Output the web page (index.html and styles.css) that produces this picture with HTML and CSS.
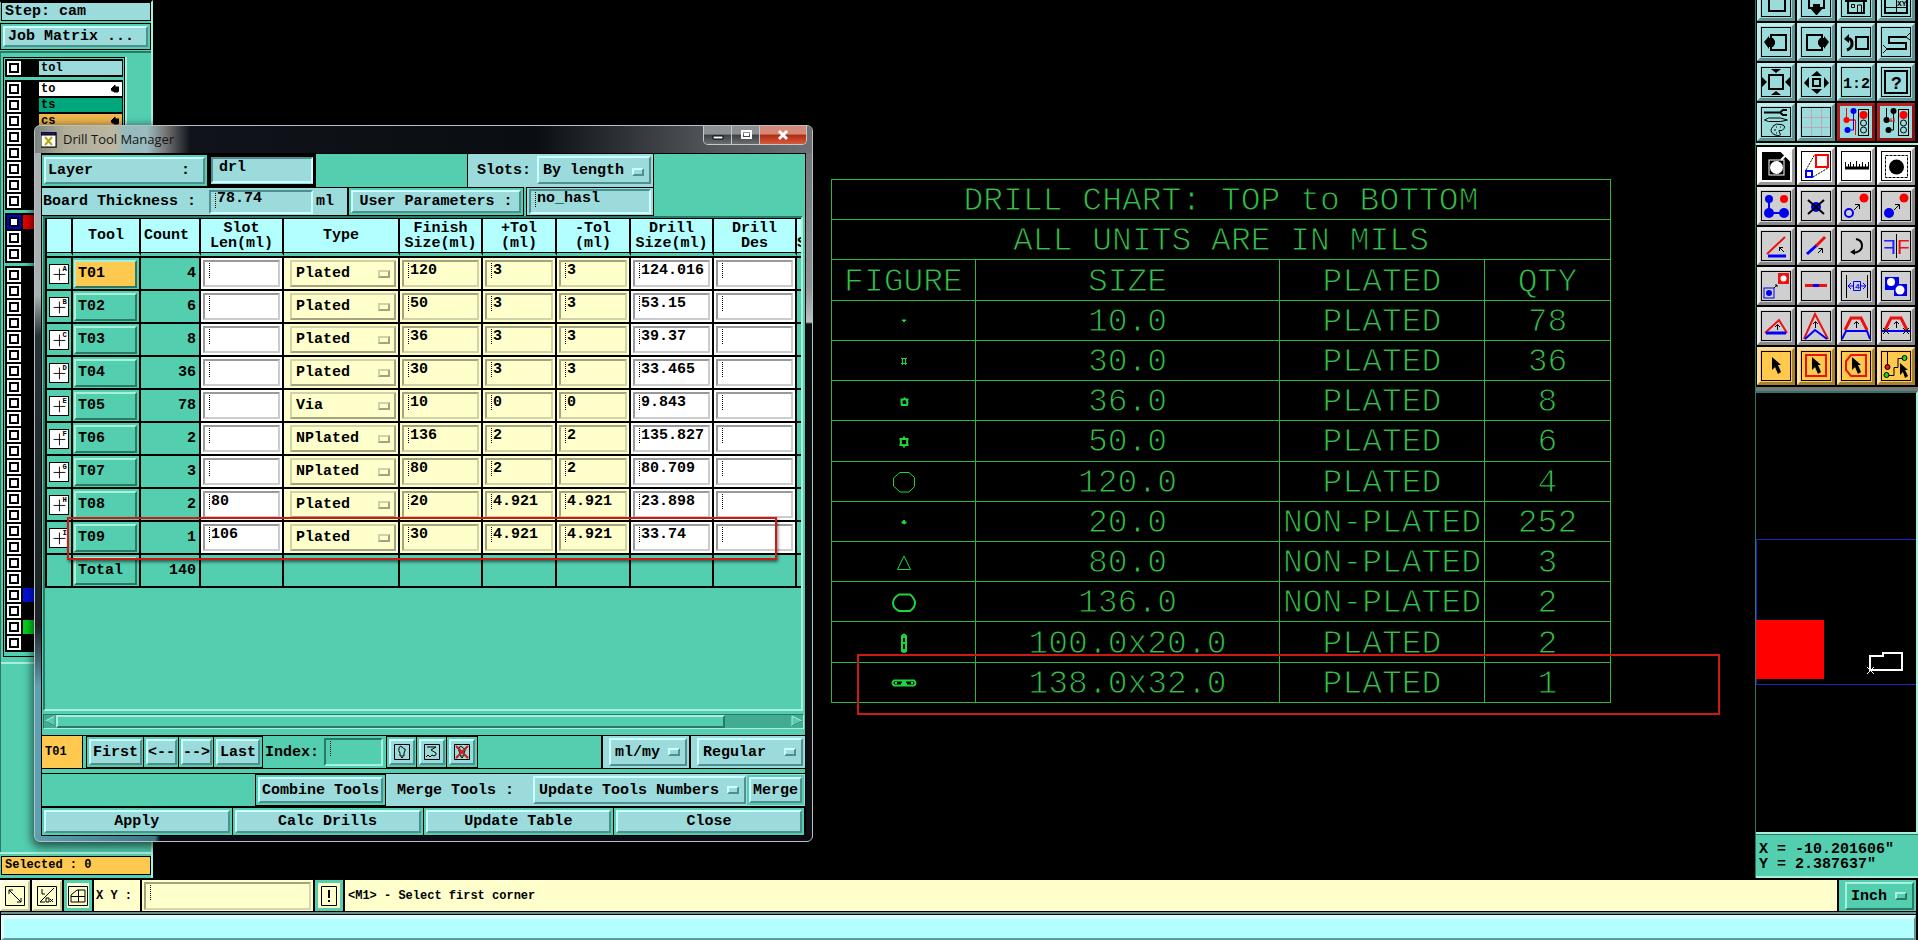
FILE: index.html
```html
<!DOCTYPE html>
<html lang="en">
<head>
  <meta charset="UTF-8">
  <title>Drill Tool Manager</title>
  <link rel="stylesheet" href="styles.css">
</head>
<body>

  <div class="workspace">

    <aside class="left-panel">
      <div class="step">Step: cam</div>
      <button class="btn matrix">Job Matrix ...</button>
      <div class="layers">
        <div class="layer-list" id="layers"></div>
      </div>
      <div class="left-fill"></div>
      <div class="selected">Selected : 0</div>
    </aside>

    <main class="canvas">
      <table class="chart">
        <colgroup><col class="c-fig"><col class="c-size"><col class="c-plated"><col class="c-qty"></colgroup>
        <tr><td colspan="4">DRILL CHART: TOP to BOTTOM</td></tr>
        <tr><td colspan="4">ALL UNITS ARE IN MILS</td></tr>
        <tr><td>FIGURE</td><td>SIZE</td><td>PLATED</td><td>QTY</td></tr>
        <tr><td><svg class="fig" viewBox="0 0 30 30"><path d="M13 14h4l-2 2z" fill="#1fd53c"/></svg></td><td>10.0</td><td>PLATED</td><td>78</td></tr>
        <tr><td><svg class="fig" viewBox="0 0 30 30"><path d="M13.500 12v7M16.500 12v7M12 12.500h6M12 17.500h6"/></svg></td><td>30.0</td><td>PLATED</td><td>36</td></tr>
        <tr><td><svg class="fig" viewBox="0 0 30 30"><path d="M12.500 12.500l2 0 1-1 1 1 2 0-.5 2 .5 1-.5 2.500h-5l-.5-2.500z" stroke-width="2"/></svg></td><td>36.0</td><td>PLATED</td><td>8</td></tr>
        <tr><td><svg class="fig" viewBox="0 0 30 30"><path d="M11.500 12h2.500l1-1.500 1 1.500h2.500l-.5 3 .5 3h-2.500l-1 1.500-1-1.500h-2.500l.5-3z" stroke-width="2"/></svg></td><td>50.0</td><td>PLATED</td><td>6</td></tr>
        <tr><td><svg class="fig" viewBox="0 0 30 30"><path d="M11 5.500h9l5.500 5v9l-5.500 5.500h-9l-6.500-6v-8z"/></svg></td><td>120.0</td><td>PLATED</td><td>4</td></tr>
        <tr><td><svg class="fig" viewBox="0 0 30 30"><path d="M12.500 15.500h5M15 13v4M14 14l2 3" stroke-width="2"/></svg></td><td>20.0</td><td>NON-PLATED</td><td>252</td></tr>
        <tr><td><svg class="fig" viewBox="0 0 30 30"><path d="M15 8l6.500 13.500h-13z"/></svg></td><td>80.0</td><td>NON-PLATED</td><td>3</td></tr>
        <tr><td><svg class="fig" viewBox="0 0 30 30"><path d="M10 6.500h11q5 4 5 8.500t-5 8h-11q-6-3-6-8t6-8.500z" stroke-width="2"/></svg></td><td>136.0</td><td>NON-PLATED</td><td>2</td></tr>
        <tr><td><svg class="fig" viewBox="0 0 30 30"><path d="M13 8q2-3 4 0v15q-2 2-4 0zM13 15h4M14 9h2M14 22h2" stroke-width="2"/></svg></td><td>100.0x20.0</td><td>PLATED</td><td>2</td></tr>
        <tr><td><svg class="fig" viewBox="0 0 30 30"><path d="M5 12.500h20q3 3 0 5h-20q-3-3 0-5zM13 14h4M12 16h6M6 15h2M22 15h2" stroke-width="2"/></svg></td><td>138.0x32.0</td><td>PLATED</td><td>1</td></tr>
      </table>
      <div class="mark mark-chart"></div>
    </main>

    <aside class="right-panel">
      <div class="icons view-icons">
        <button aria-label="Zoom box"><svg viewBox="0 0 32 32"><rect class="fr" x="1.500" y="1.500" width="29" height="29"/><rect x="9" y="9" width="16" height="16"/></svg></button>
        <button aria-label="Pan down"><svg viewBox="0 0 32 32"><rect class="fr" x="1.500" y="1.500" width="29" height="29"/><rect x="9" y="7" width="15" height="15"/><path class="k" d="M13 18h7v4h3l-6 7h-1l-6-7h3z"/></svg></button>
        <button aria-label="Home"><svg viewBox="0 0 32 32"><rect class="fr" x="1.500" y="1.500" width="29" height="29"/><path d="M5 15h22M7 14L11 6h10l4 8M8 15v12h16V15" /><path class="n" d="M17.500 27v-8h4v8M11.500 18.500h3v3h-3z"/></svg></button>
        <button aria-label="Window XY"><svg viewBox="0 0 32 32"><rect class="fr" x="1.500" y="1.500" width="29" height="29"/><path d="M5 5h22v22H5z"/><path class="n" d="M5 21.500h22M16.500 5v22"/><text x="17" y="20" class="tiny">XY</text></svg></button>

        <button aria-label="Pan left"><svg viewBox="0 0 32 32"><rect class="fr" x="1.500" y="1.500" width="29" height="29"/><rect x="11" y="9" width="15" height="15"/><path class="k" d="M4 16l5-6v2h4l2 3v3l-2 3H9v2z"/></svg></button>
        <button aria-label="Pan right"><svg viewBox="0 0 32 32"><rect class="fr" x="1.500" y="1.500" width="29" height="29"/><rect x="7" y="9" width="15" height="15"/><path class="k" d="M29 16l-5-6v2h-4l-2 3v3l2 3h4v2z"/></svg></button>
        <button aria-label="Previous view"><svg viewBox="0 0 32 32"><rect class="fr" x="1.500" y="1.500" width="29" height="29"/><rect x="16" y="11" width="12" height="12"/><path d="M6 13h4q2 1 2 5t-5 6" stroke-width="3"/><path class="k" d="M4 13l5-5v9z"/></svg></button>
        <button aria-label="Serpentine"><svg viewBox="0 0 32 32"><rect class="fr" x="1.500" y="1.500" width="29" height="29"/><path d="M27 11H9v6h17v6H7"/><path class="n" d="M26 11l4-4M26 11l4 3M7 23l-4-4M7 23l-4 4"/></svg></button>

        <button aria-label="Zoom out"><svg viewBox="0 0 32 32"><rect class="fr" x="1.500" y="1.500" width="29" height="29"/><rect x="9" y="9" width="14" height="14"/><path class="k" d="M11 3h10l-5 4zM11 29h10l-5-4zM2 11v10l5-5zM30 11v10l-5-5z"/></svg></button>
        <button aria-label="Zoom in"><svg viewBox="0 0 32 32"><rect class="fr" x="1.500" y="1.500" width="29" height="29"/><rect x="13" y="13" width="7" height="7"/><path class="k" d="M11 10h11l-5-5zM11 23h11l-5 5zM9 11v11l-5-5zM24 11v11l5-5z"/></svg></button>
        <button aria-label="Scale 1:2"><svg viewBox="0 0 32 32"><rect class="fr" x="1.500" y="1.500" width="29" height="29"/><text x="3" y="22" class="scale">1:2</text></svg></button>
        <button aria-label="Help"><svg viewBox="0 0 32 32"><rect class="fr" x="1.500" y="1.500" width="29" height="29"/><rect x="5" y="5" width="22" height="22"/><text x="11" y="23" class="help">?</text></svg></button>

        <button aria-label="Settings"><svg viewBox="0 0 32 32"><rect class="fr" x="1.500" y="1.500" width="29" height="29"/><path d="M4 6.500h16M27 4h-4l-3 2.500 3 2.500h4" /><path class="n" d="M4.500 14l4-2h12l7 2-7 1.500h-12zM13 20q3-3 8-1.500 5 1 3 4t-4 2 0 3-6 1q-3-2-3-4t2-4zM16 21h1M20 21h1M14 24h2M16 27h1"/></svg></button>
        <button aria-label="Grid"><svg viewBox="0 0 32 32"><path d="M11.500 2v28M21.500 2v28M2 11.500h28M2 21.500h28" stroke="#bda9b4" stroke-width="1"/><rect class="fr" x="1.500" y="1.500" width="29" height="29"/></svg></button>
        <button class="red" aria-label="Net on"><svg viewBox="0 0 32 32"><rect x="18.500" y="3.500" width="10" height="26" class="n"/><circle class="r" cx="23.500" cy="9" r="4"/><circle class="n" cx="23.500" cy="17" r="3"/><circle class="n" cx="23.500" cy="24" r="3"/><path d="M6.500 2v12h9v15M15 14h-8" stroke="#f00" stroke-width="1"/><path d="M13.500 5v19H7" stroke="#00f" stroke-width="1"/><circle class="b" cx="13.500" cy="5" r="3"/><circle class="r" cx="6.500" cy="14" r="3"/><circle class="b" cx="7.500" cy="24" r="3"/></svg></button>
        <button class="red" aria-label="Net off"><svg viewBox="0 0 32 32"><rect x="18.500" y="3.500" width="10" height="26" class="n"/><circle class="r" cx="23.500" cy="9" r="4"/><circle class="n" cx="23.500" cy="17" r="3"/><circle class="n" cx="23.500" cy="24" r="3"/><path class="n" d="M6.500 2v12M13.500 5v19H7"/><path d="M9 15h6M9 13v3M11 12v4M14 12v4" stroke="#c22" stroke-width="1"/><circle class="k" cx="13.500" cy="5" r="3"/><circle class="k" cx="6.500" cy="14" r="3"/><circle class="k" cx="8.500" cy="24" r="3"/></svg></button>
      </div>

      <div class="icons edit-icons">
        <button class="white" aria-label="Select window"><svg viewBox="0 0 32 32"><rect class="k" x="2" y="2" width="28" height="28"/><rect x="9" y="10" width="15" height="15" stroke="#fff" stroke-width="1"/><circle cx="16.500" cy="17.500" r="6.500" fill="#fff" stroke="none"/><path d="M21 10l5-5M23 3h6v6z" stroke="#fff" fill="#fff"/></svg></button>
        <button class="white" aria-label="Scale"><svg viewBox="0 0 32 32"><rect class="fr" x="1.500" y="1.500" width="29" height="29"/><path class="n" d="M6 20L15 4M13 27l15-9" stroke-dasharray="2 1"/><rect x="16" y="5" width="12" height="12" stroke="#f00"/><rect x="6" y="21" width="6" height="6" stroke="#00f"/></svg></button>
        <button class="white" aria-label="Measure"><svg viewBox="0 0 32 32"><rect class="fr" x="1.500" y="1.500" width="29" height="29"/><path d="M5 18h24" stroke-width="3"/><path class="n" d="M5.500 12v6M8.500 14v4M10.500 12v6M13.500 14v4M16.500 11v7M19.500 14v4M22.500 12v6M25.500 14v4M28.500 12v6"/></svg></button>
        <button class="white" aria-label="Pad"><svg viewBox="0 0 32 32"><rect class="fr" x="1.500" y="1.500" width="29" height="29"/><rect class="n" x="5.500" y="5.500" width="22" height="22" stroke-dasharray="3 1"/><circle class="k" cx="16.500" cy="17" r="7.500"/></svg></button>

        <button aria-label="Connect"><svg viewBox="0 0 32 32"><rect class="fr" x="1.500" y="1.500" width="29" height="29"/><path d="M9 9v14h15" stroke="#00f"/><circle class="b" cx="9" cy="9" r="4"/><circle class="b" cx="9" cy="23" r="5"/><circle class="b" cx="24" cy="23" r="5"/><circle class="r" cx="24" cy="9" r="4"/></svg></button>
        <button aria-label="Delete"><svg viewBox="0 0 32 32"><rect class="fr" x="1.500" y="1.500" width="29" height="29"/><circle class="b" cx="16" cy="17" r="5"/><path d="M8 10l16 14M8 24l16-14"/></svg></button>
        <button aria-label="Copy"><svg viewBox="0 0 32 32"><rect class="fr" x="1.500" y="1.500" width="29" height="29"/><circle cx="9" cy="23" r="4" stroke="#00f"/><circle class="r" cx="24" cy="8" r="4.500"/><path class="n" d="M14 20l5-5M15 14.500h4.500V19"/></svg></button>
        <button aria-label="Move"><svg viewBox="0 0 32 32"><rect class="fr" x="1.500" y="1.500" width="29" height="29"/><circle class="b" cx="9" cy="23" r="5"/><circle class="r" cx="24" cy="8" r="4.500"/><path class="n" d="M14 20l5-5M15 14.500h4.500V19"/></svg></button>

        <button aria-label="Rotate line"><svg viewBox="0 0 32 32"><rect class="fr" x="1.500" y="1.500" width="29" height="29"/><path d="M7 24L25 7" stroke="#e11"/><path d="M8 26h18" stroke="#00f" stroke-width="3"/><path class="n" d="M24 22l-5-5M19.500 21v-3.500H23"/></svg></button>
        <button aria-label="Extend line"><svg viewBox="0 0 32 32"><rect class="fr" x="1.500" y="1.500" width="29" height="29"/><path d="M7 24l10-9" stroke="#00f" stroke-width="3"/><path d="M16 16l9-9" stroke="#e11" stroke-width="3"/><path class="n" d="M18 23l4-4M18.500 18.500h4V23"/></svg></button>
        <button aria-label="Rotate"><svg viewBox="0 0 32 32"><rect class="fr" x="1.500" y="1.500" width="29" height="29"/><path d="M16 9q6 1 6 7t-9 7"/><path class="k" d="M10 22l5-3v6z"/></svg></button>
        <button aria-label="Mirror"><svg viewBox="0 0 32 32"><rect class="fr" x="1.500" y="1.500" width="29" height="29"/><path class="n" d="M16.500 4v24"/><text class="f red-f" x="17" y="24">F</text><text class="f blue-f" x="-16" y="24" transform="scale(-1 1)">F</text></svg></button>

        <button aria-label="Substitute"><svg viewBox="0 0 32 32"><rect class="fr" x="1.500" y="1.500" width="29" height="29"/><rect x="19" y="4" width="9" height="9" fill="#e11" stroke="#e11"/><circle cx="23.500" cy="8.500" r="3" fill="#fff" stroke="none"/><rect x="4" y="18" width="10" height="10" stroke="#00f" stroke-width="1"/><circle class="b" cx="9" cy="23" r="3"/><path class="n" d="M14 18l3-3M15 15h2v2"/></svg></button>
        <button aria-label="Merge line"><svg viewBox="0 0 32 32"><rect class="fr" x="1.500" y="1.500" width="29" height="29"/><path d="M5 15.500h22" stroke="#e11" stroke-width="3"/><path d="M13 15.500h6" stroke="#00f" stroke-width="3"/></svg></button>
        <button aria-label="Spacing"><svg viewBox="0 0 32 32"><rect class="fr" x="1.500" y="1.500" width="29" height="29"/><path class="n" d="M6.500 5v23M27.500 5v23"/><path d="M8 16h6M20 16h6M11 13l-3 3 3 3M23 13l3 3-3 3M13.500 11.500h7v9h-7z" stroke="#00f" stroke-width="1"/><text x="15" y="19" class="tiny blue-f">4</text></svg></button>
        <button aria-label="Union"><svg viewBox="0 0 32 32"><rect class="fr" x="1.500" y="1.500" width="29" height="29"/><path class="b" d="M5 7h14v7h8v12H14v-6H5z"/><circle cx="11" cy="12" r="4" fill="#fff" stroke="none"/><circle cx="20" cy="20" r="4.500" fill="#fff" stroke="none"/></svg></button>

        <button aria-label="Angle"><svg viewBox="0 0 32 32"><rect class="fr" x="1.500" y="1.500" width="29" height="29"/><path d="M5 23L19 10l8 13" stroke="#e11"/><path d="M6 23h20" stroke="#00f" stroke-width="3"/><path class="n" d="M17.500 20v-5M15 17l2.500-2.500L20 17"/></svg></button>
        <button aria-label="Taper"><svg viewBox="0 0 32 32"><rect class="fr" x="1.500" y="1.500" width="29" height="29"/><path d="M4 29L15 4l13 25" stroke="#e11"/><path d="M5 29l10-9 12 9" stroke="#00f"/><path class="n" d="M15.500 18v-6M13 14l2.500-2.500L18 14"/></svg></button>
        <button aria-label="Trapezoid"><svg viewBox="0 0 32 32"><rect class="fr" x="1.500" y="1.500" width="29" height="29"/><path d="M5 20l6-12h10l6 12" stroke="#e11" stroke-width="3"/><path d="M2 29l4-8h21l3 8" stroke="#00f"/><path class="n" d="M16.500 18v-6M14 14l2.500-2.500L19 14"/></svg></button>
        <button aria-label="Trapezoid trim"><svg viewBox="0 0 32 32"><rect class="fr" x="1.500" y="1.500" width="29" height="29"/><path d="M5 20l6-12h10l6 12" stroke="#e11" stroke-width="3"/><path d="M2 21h28" stroke="#00f"/><path class="n" d="M16.500 18v-6M14 14l2.500-2.500L19 14M3 18l6 6M9 18l-6 6M23 18l6 6M29 18l-6 6"/></svg></button>

        <button class="amber" aria-label="Pointer"><svg viewBox="0 0 32 32"><rect class="fr" x="1.500" y="1.500" width="29" height="29"/><path class="k" d="M12 7l9 8-3 0 3 7-3 2-3-7-3 3z"/></svg></button>
        <button class="amber" aria-label="Pointer in box"><svg viewBox="0 0 32 32"><rect class="fr" x="1.500" y="1.500" width="29" height="29"/><rect x="6" y="5" width="20" height="21" stroke="#e11"/><path class="k" d="M12 7l9 8-3 0 3 7-3 2-3-7-3 3z"/></svg></button>
        <button class="amber" aria-label="Pointer in polygon"><svg viewBox="0 0 32 32"><rect class="fr" x="1.500" y="1.500" width="29" height="29"/><path d="M11 5h15v21H11l-5-6V11z" stroke="#e11"/><path class="k" d="M12 7l9 8-3 0 3 7-3 2-3-7-3 3z"/></svg></button>
        <button class="amber" aria-label="Pointer on net"><svg viewBox="0 0 32 32"><rect class="fr" x="1.500" y="1.500" width="29" height="29"/><path class="n" d="M7.500 2v15M7 25.500h7v-8h4v-9h6"/><circle cx="7.500" cy="17" r="2.500" fill="#e11" stroke-width="1"/><circle cx="6.500" cy="25" r="2.500" fill="#1d1" stroke-width="1"/><circle cx="24.500" cy="8" r="2.500" fill="#1d1" stroke-width="1"/><path class="k" d="M20 13l8 7-3 0 3 6-3 2-2-6-3 3z"/></svg></button>
      </div>

      <div class="overview">
        <svg viewBox="0 2 160 440" preserveAspectRatio="xMinYMin slice">
          <path d="M160 148.500H.5v145H160" stroke="#1a24c0" fill="none"/>
          <path d="M0 229h68v59H0z" fill="#f00" stroke="none"/>
          <path d="M114 279v-14h13v-3h19v17z" stroke="#fff" stroke-width="2" fill="none"/>
          <path d="M111 276l7 7M118 276l-7 7" stroke="#fff" fill="none"/>
        </svg>
      </div>
      <div class="coords">X = -10.201606"<br>Y = 2.387637"</div>
    </aside>
  </div>

  <footer class="command">
    <button class="tool cream" aria-label="Line"><svg viewBox="0 0 20 20"><path d="M.5.500h19v19H.5zM4 4l12 12M4 8V4h4M16 12v4h-4"/></svg></button>
    <button class="tool cream" aria-label="Angle lock"><svg viewBox="0 0 20 20"><path d="M.5.500h19v19H.5zM3 16L17 2M5 3v5h3M3 16h5M9 12h3v4H9zM13 13l3 3M16 13l-3 3"/></svg></button>
    <button class="tool teal" aria-label="Snap grid"><svg viewBox="0 0 20 20"><path d="M.5.500h19v19H.5zM3 9l6-5h8v12H3zM3 10.500h14M10.500 4v12"/></svg></button>
    <label class="xy" for="xy">X Y :</label>
    <div class="xy-box"><input class="field" id="xy"></div>
    <button class="tool teal" aria-label="Alert"><svg viewBox="0 0 20 20"><path d="M2.500.500h15v19h-15z"/><path d="M10 4v8M10 14v2" stroke-width="2"/></svg></button>
    <div class="message">&lt;M1&gt; - Select first corner</div>
    <div class="unit"><span class="drop"><select aria-label="Units"><option>Inch</option></select></span></div>
  </footer>
  <div class="status"></div>

  <section class="dialog">
    <header class="titlebar">
      <svg class="app" viewBox="0 0 16 16"><path d="M0 1h15v14H0z" fill="#fff"/><path d="M0 0h15v3H0z" fill="#181a6c"/><path d="M15.500 1v14.500H0" stroke="#333" fill="none"/><path d="M4 5l7 8M11 5l-7 8" stroke="#b5a814" stroke-width="2"/></svg>
      <h1>Drill Tool Manager</h1>
      <div class="win-btns">
        <button class="min" aria-label="Minimize"><svg viewBox="0 0 12 12"><path d="M1 7h10v3H1z" fill="#fff"/></svg></button>
        <button class="max" aria-label="Maximize"><svg viewBox="0 0 12 12"><path d="M2 2h9v7H2zM5 5h3v1H5z" stroke="#fff" stroke-width="2" fill="none"/></svg></button>
        <button class="close" aria-label="Close"><svg viewBox="0 0 12 12"><path d="M2 2l8 8M10 2l-8 8" stroke="#fff" stroke-width="3"/></svg></button>
      </div>
    </header>

    <div class="dialog-body">
      <div class="bar bar-layer">
        <button class="btn layer-btn"><span>Layer</span><span>:</span></button>
        <div class="layer-input"><input class="field" aria-label="Layer" value="drl"></div>
        <div class="slots">
          <label for="slots">Slots:</label>
          <span class="drop"><select id="slots"><option>By length</option></select></span>
        </div>
      </div>

      <div class="bar bar-board">
        <div class="board">
          <label for="board">Board Thickness :</label>
          <input class="field caret" id="board" value="78.74">
          <span>ml</span>
        </div>
        <button class="btn params">User Parameters :</button>
        <div class="finish"><input class="field caret" aria-label="User parameters" value="no_hasl"></div>
      </div>

      <div class="table-view">
        <table class="tools">
          <colgroup>
            <col class="w-fig"><col class="w-tool"><col class="w-count"><col class="w-len"><col class="w-type"><col class="w-len"><col class="w-tol"><col class="w-tol"><col class="w-len"><col class="w-len"><col>
          </colgroup>
          <thead>
            <tr>
              <th></th><th>Tool</th><th class="left">Count</th><th>Slot<br>Len(ml)</th><th>Type</th><th>Finish<br>Size(ml)</th>
              <th>+Tol<br>(ml)</th><th>-Tol<br>(ml)</th><th>Drill<br>Size(ml)</th><th>Drill<br>Des</th><th class="cut"><br>S</th>
            </tr>
          </thead>
          <tbody id="tools"></tbody>
        </table>
      </div>

      <div class="scrollbar">
        <svg viewBox="0 0 12 12"><path d="M11 1v10L1 6z" fill="#53cfb0" stroke="#a8f0dc"/><path d="M1 6l10 5V1" stroke="#2b7866" fill="none"/></svg>
        <div class="thumb"></div>
        <div class="trough"></div>
        <svg viewBox="0 0 12 12"><path d="M1 1v10l10-5z" fill="#53cfb0" stroke="#a8f0dc"/><path d="M1 11l10-5" stroke="#2b7866" fill="none"/></svg>
      </div>

      <div class="bar bar-nav">
        <div class="current">T01</div>
        <button class="btn word">First</button>
        <button class="btn">&lt;--</button>
        <button class="btn">--&gt;</button>
        <button class="btn word">Last</button>
        <div class="index">
          <label for="index">Index:</label>
          <input class="field caret" id="index">
        </div>
        <button class="btn pic" aria-label="Light on"><svg viewBox="0 0 16 16"><path d="M.5.500h15v15H.5zM6 12V9Q4 7 5 4t3-1 3 2-1 4v3zM7 13.500h2"/></svg></button>
        <button class="btn pic" aria-label="Path"><svg viewBox="0 0 16 16"><path d="M.5.500h15v15H.5zM3 3h9L7 6l5 3q1 2-2 3l-2-1-2 2-2-2-2 2"/></svg></button>
        <button class="btn pic" aria-label="Light off"><svg viewBox="0 0 16 16"><path d="M.5.500h15v15H.5zM6 12V9Q4 7 5 4t3-1 3 2-1 4v3zM7 13.500h2"/><path d="M2 2l12 12M14 2L2 14" stroke="#d01818" stroke-width="2"/></svg></button>
        <div class="pick pick-unit"><span class="drop"><select aria-label="Unit"><option>ml/my</option></select></span></div>
        <div class="pick pick-mode"><span class="drop"><select aria-label="Mode"><option>Regular</option></select></span></div>
      </div>

      <div class="bar bar-merge">
        <button class="btn combine">Combine Tools</button>
        <div class="merge">
          <label for="merge">Merge Tools :</label>
          <span class="drop"><select id="merge"><option>Update Tools Numbers</option></select></span>
          <button class="btn">Merge</button>
        </div>
      </div>

      <div class="bar bar-actions">
        <button class="btn">Apply</button>
        <button class="btn">Calc Drills</button>
        <button class="btn">Update Table</button>
        <button class="btn">Close</button>
      </div>
    </div>
    <div class="mark mark-tool"></div>
  </section>

  <script>
    // count, slot length, type, finish size, +tol, -tol, drill size
    const tools = [
      [4, "", "Plated", "120", "3", "3", "124.016"],
      [6, "", "Plated", "50", "3", "3", "53.15"],
      [8, "", "Plated", "36", "3", "3", "39.37"],
      [36, "", "Plated", "30", "3", "3", "33.465"],
      [78, "", "Via", "10", "0", "0", "9.843"],
      [2, "", "NPlated", "136", "2", "2", "135.827"],
      [3, "", "NPlated", "80", "2", "2", "80.709"],
      [2, "80", "Plated", "20", "4.921", "4.921", "23.898"],
      [1, "106", "Plated", "30", "4.921", "4.921", "33.74"]
    ];

    function cell(cls, label, value) {
      return `<td class="${cls}"><input class="field caret" aria-label="${label}" value="${value}"></td>`;
    }

    let rows = "";
    tools.forEach((t, i) => {
      const name = "T0" + (i + 1);
      rows += `<tr>
        <td><svg class="sym" viewBox="0 0 20 20"><path d="M10.500 4v13M4 10.500h13"/><text x="14" y="7">${"ABCDEFGHI"[i]}</text></svg></td>
        <td><button class="tool-btn${i === 0 ? " active" : ""}">${name}</button></td>
        <td class="count">${t[0]}</td>
        ${cell("plain", name + " slot length", t[1])}
        <td class="soft"><span class="drop"><select aria-label="${name} type"><option>${t[2]}</option></select></span></td>
        ${cell("soft", name + " finish size", t[3])}
        ${cell("soft", name + " plus tolerance", t[4])}
        ${cell("soft", name + " minus tolerance", t[5])}
        ${cell("plain", name + " drill size", t[6])}
        ${cell("plain", name + " drill des", "")}
        <td></td>
      </tr>`;
    });
    rows += `<tr><td></td><td><button class="tool-btn">Total</button></td><td class="count">140</td>${"<td></td>".repeat(8)}</tr>`;
    document.getElementById("tools").innerHTML = rows;

    const hand = '<svg viewBox="0 0 8 8"><path d="M0 4l4-4v2h4v4H7v1H3V6H1z"/></svg>';
    const groups = [
      [["tol", "cyan"]],
      [["to", "white", 1], ["ts", "green"], ["cs", "gold", 1], 0, 0, 0, 0, 0],
      ["red", 0, 0],
      Array(24).fill(0)
    ];
    groups[3][20] = "blue";
    groups[3][22] = "lime";

    document.getElementById("layers").innerHTML = groups.map(g => {
      const items = g.map(l => {
        let rest = "";
        if (Array.isArray(l)) rest = `<span class="name ${l[1]}">${l[0]}${l[2] ? hand : ""}</span>`;
        else if (l) rest = `<span class="chip ${l}"></span>`;
        return `<label class="layer${l === "red" ? " work" : ""}"><input type="checkbox" aria-label="Layer">${rest}</label>`;
      });
      return `<div class="group">${items.join("")}</div>`;
    }).join("");
  </script>

</body>
</html>
```
FILE: styles.css
```css
:root {
  --teal: #53cfb0;
  --light: #a8f0dc;
  --dark: #2b7866;
  --cyan: #9bdbdb;
  --cyan-light: #ccffff;
  --cyan-dark: #4f8f8f;
  --cream: #ffffcc;
  --amber: #ffc84e;
}

*, *::after {
  box-sizing: border-box;
}

body {
  margin: 0;
  height: 100vh;
  display: flex;
  flex-direction: column;
  position: relative;
  overflow: hidden;
  background: #000;
  color: #000;
  font: bold 15px/15px "Liberation Mono", monospace;
}

button, input, select {
  font: inherit;
  color: inherit;
  padding: 0;
  margin: 0;
  border-radius: 0;
}

svg {
  display: block;
  fill: none;
  stroke: #000;
}

svg text {
  stroke: none;
  fill: #000;
}

/* shared controls */
.btn {
  margin: 3px;
  background: var(--cyan);
  border: 2px solid;
  border-color: var(--cyan-light) var(--cyan-dark) var(--cyan-dark) var(--cyan-light);
  box-shadow: 0 0 0 2px var(--teal), 0 0 0 3px #000;
  white-space: nowrap;
}

.field {
  display: block;
  width: 100%;
  min-width: 0;
  height: 26px;
  background: transparent;
  border: 2px solid;
  border-color: var(--cyan-dark) var(--cyan-light) var(--cyan-light) var(--cyan-dark);
  padding: 0 0 6px 6px;
  outline: none;
}

/* idle text cursor */
.caret {
  background: repeating-linear-gradient(#000 0 1px, transparent 1px 2px) 4px 1px / 1px 15px no-repeat;
}

.drop {
  display: block;
  position: relative;
}

.drop select {
  display: block;
  appearance: none;
  width: 100%;
  height: 28px;
  padding: 0 4px;
  background: var(--cyan);
  border: 2px solid;
  border-color: var(--cyan-light) var(--cyan-dark) var(--cyan-dark) var(--cyan-light);
}

.drop::after {
  content: "";
  position: absolute;
  right: 7px;
  top: calc(50% - 4px);
  width: 12px;
  height: 8px;
  border: 2px solid;
  border-color: var(--cyan-light) var(--cyan-dark) var(--cyan-dark) var(--cyan-light);
  pointer-events: none;
}

.mark {
  position: absolute;
  border: 2px solid #cf1a14;
  box-shadow: 1px 2px 3px #0008;
  pointer-events: none;
}

.workspace {
  flex: 1;
  min-height: 0;
  display: flex;
}

/* left panel */
.left-panel {
  width: 153px;
  display: flex;
  flex-direction: column;
  background: var(--teal);
  border-right: 2px solid var(--light);
  border-top: 2px solid #000;
}

.step {
  margin: 0 0 2px 1px;
  height: 19px;
  padding: 1px 3px;
  background: var(--cyan);
  border: 1px solid #000;
}

.matrix {
  height: 21px;
  text-align: left;
  padding-left: 3px;
}

.layers {
  height: 611px;
  margin-top: 1px;
  padding: 4px 0 0 2px;
  border-top: 2px solid var(--dark);
  border-left: 1px solid var(--dark);
}

.layer-list {
  width: 122px;
  border: 1px solid #000;
  padding: 1px;
  box-shadow: 2px 0 0 var(--light);
}

.group {
  background: #000;
  padding: 1px 1px 1px 2px;
  margin-bottom: 3px;
}

.layer {
  display: flex;
  align-items: center;
  height: 16px;
  gap: 2px;
}

.layer input {
  appearance: none;
  width: 14px;
  height: 14px;
  background: #fff;
  border: 2px solid #fff;
  box-shadow: inset 0 0 0 2px #000;
}

.work input {
  border-color: #0000d0;
}

.name {
  flex: 1;
  display: flex;
  justify-content: space-between;
  align-items: center;
  height: 14px;
  margin-left: 16px;
  padding: 0 3px 0 2px;
  font-size: 12px;
}

.name svg {
  width: 8px;
  height: 8px;
  fill: #000;
}

.chip {
  width: 14px;
  height: 14px;
}

.cyan { background: var(--cyan); }
.white { background: #fff; }
.green { background: #00a67c; }
.gold { background: #eeb64c; }
.red { background: #e00000; }
.blue { background: #0010e0; }
.lime { background: #00d020; }

.left-fill {
  flex: 1;
  border: 1px solid var(--dark);
  border-width: 0 0 0 1px;
  box-shadow: inset 0 2px var(--light), 0 2px var(--light);
}

.selected {
  height: 19px;
  margin: 4px 0 3px 1px;
  padding: 1px 3px;
  background: var(--amber);
  border: 1px solid #000;
  font-size: 12px;
}

/* canvas */
.canvas {
  flex: 1;
  position: relative;
}

.chart {
  position: absolute;
  left: 678px;
  top: 179px;
  width: 780px;
  height: 524px;
  table-layout: fixed;
  border-collapse: collapse;
  color: #35c04a;
  font-size: 33px;
  font-weight: normal;
  line-height: 33px;
  text-align: center;
}

.chart td {
  padding: 4px 0 0;
  border: 1px solid #2eb53e;
  white-space: nowrap;
  -webkit-text-stroke: 1px #000;
}

.c-fig { width: 144px; }
.c-size { width: 304px; }
.c-plated { width: 205px; }

.fig {
  width: 30px;
  height: 30px;
  margin: 0 auto 2px;
  stroke: #1fd53c;
}

.mark-chart {
  left: 704px;
  top: 654px;
  width: 863px;
  height: 61px;
}

/* right panel */
.right-panel {
  width: 163px;
  display: flex;
  flex-direction: column;
  overflow: hidden;
  background: #000;
  border-left: 1px solid var(--dark);
}

.icons {
  display: grid;
  grid-template-columns: repeat(4, 38px);
  gap: 2px;
  padding: 2px 0 2px 1px;
}

.view-icons {
  margin-top: -19px;
  border-bottom: 2px solid var(--light);
}

.edit-icons {
  padding-top: 2px;
  border-bottom: 4px solid #777;
}

.icons button {
  height: 38px;
  background: var(--cyan);
  border: 3px solid;
  border-color: #bdeeee #5f9494 #5f9494 #bdeeee;
}

.icons svg {
  width: 32px;
  height: 32px;
  stroke-width: 2;
}

.edit-icons button {
  background: #cfcfcf;
  border-color: #ececec #8a8a8a #8a8a8a #ececec;
}

.edit-icons .white {
  background: #fff;
  border-color: #fff #999 #999 #fff;
}

.edit-icons .amber {
  background: var(--amber);
  border-color: #ffe09a #a8832f #a8832f #ffe09a;
}

.icons .red {
  background: var(--cyan);
  border-color: #b52020 #8c1010 #8c1010 #b52020;
}

.icons .fr, .icons .n {
  stroke-width: 1;
}

.icons .k { fill: #000; stroke: none; }
.icons .r { fill: #f00; stroke: none; }
.icons .b { fill: #0000ee; stroke: none; }

.icons .tiny { font-size: 8px; }
.icons .scale { font-size: 15px; }
.icons .help { font-size: 18px; }
.icons .f { font: normal 21px/21px "Liberation Sans", sans-serif; }
.icons .red-f { fill: #e11; }
.icons .blue-f { fill: #22f; }

.overview {
  flex: 1;
  min-height: 0;
  border-top: 2px solid var(--dark);
  border-right: 2px solid var(--light);
}

.overview svg {
  width: 100%;
  height: 100%;
}

.coords {
  height: 46px;
  padding: 8px 3px;
  background: var(--teal);
  border: solid var(--light);
  border-width: 2px 0;
  box-shadow: inset 0 1px var(--dark);
}

/* command line */
.command {
  display: flex;
  gap: 2px;
  height: 34px;
  padding: 1px 2px 1px 0;
  border-top: 1px solid #000;
  font-size: 12px;
}

.tool {
  width: 28px;
  border: 2px solid;
  background: var(--cream);
}

.tool.cream {
  width: 30px;
  border-color: #fffff0 #c8c8a0 #c8c8a0 #fffff0;
}

.tool.teal {
  border: 3px solid var(--teal);
}

.tool svg {
  width: 20px;
  height: 20px;
  margin: 0 auto;
}

.xy {
  width: 46px;
  padding: 9px 2px 0;
  background: var(--cream);
  white-space: nowrap;
}

.xy-box {
  width: 171px;
  padding: 2px;
  background: var(--cream);
}

.xy-box .field {
  height: 28px;
  background: repeating-linear-gradient(#000 0 1px, transparent 1px 2px) 4px 1px / 1px 15px no-repeat;
  border-color: #a3a382 #d6d6ac #d6d6ac #a3a382;
}

.message {
  flex: 1;
  padding: 9px 3px 0;
  background: var(--cream);
}

.unit {
  width: 77px;
  padding: 2px 2px 2px 6px;
  background: var(--teal);
  font-size: 15px;
}

.unit select {
  background: var(--teal);
  border-color: var(--light) var(--dark) var(--dark) var(--light);
}

.unit .drop::after {
  border-color: var(--light) var(--dark) var(--dark) var(--light);
}

.status {
  height: 25px;
  margin: 3px 2px 0 1px;
  background: #b3ffff;
  border: solid;
  border-width: 4px 2px 2px 3px;
  border-color: #d9ffff #5d9c9c #5d9c9c #e0ffff;
  box-shadow: 0 -1px #000, 0 -3px #6d8f8f;
}

/* dialog window */
.dialog {
  position: absolute;
  left: 34px;
  top: 125px;
  width: 779px;
  padding: 0 6px 5px;
  border: 1px solid #b9c0c4;
  border-radius: 6px;
  background: linear-gradient(90deg, #5ba0b4 0, #3f7687 120px, #0c0c18 125px) bottom / 100% 8px no-repeat,
    linear-gradient(#a9b0b2 0, #a9b0b2 170px, #2a3338 210px, #1c2226 500px, #5ba0b4 560px) left / 8px 100% no-repeat,
    linear-gradient(#6f7376 0, #8d9194 160px, #bcc0c2 196px, #0b0e12 198px) right / 8px 100% no-repeat,
    #0a0d12;
  box-shadow: 0 3px 10px 2px #0009;
}

.titlebar {
  display: flex;
  align-items: center;
  height: 27px;
  margin: 0 -6px;
  padding-left: 6px;
  border-radius: 5px 5px 0 0;
  background: linear-gradient(90deg, #7c8480 0, #b0ad98 30px, #bbb7a3 80px, #95b9bc 90px, #9bbcc0 112px, #777 130px, #10141a 155px, #0a0d12 500px, #54585c 680px, #6d7174 100%);
}

.titlebar h1 {
  flex: 1;
  margin: 0 0 2px 6px;
  font: normal 13px/20px "Open Sans", sans-serif;
  color: #151515;
}

.app {
  width: 16px;
  height: 16px;
}

.win-btns {
  display: flex;
  align-self: flex-start;
  height: 19px;
  margin-right: 5px;
  border: 1px solid #c5c8ca;
  border-top: 0;
  border-radius: 0 0 5px 5px;
  overflow: hidden;
}

.win-btns button {
  width: 28px;
  border: 0;
  border-right: 1px solid #c5c8ca;
  background: linear-gradient(#8d9093 0 45%, #3d4044 50%, #6b6e71);
}

.win-btns .close {
  width: 46px;
  border-right: 0;
  background: linear-gradient(#d58a78 0 45%, #b02a12 50%, #d65a3a);
}

.win-btns svg {
  width: 12px;
  height: 12px;
  margin: 0 auto;
  stroke-width: 1;
}

.dialog-body {
  background: var(--teal);
  border: 1px solid #000;
}

.bar {
  display: flex;
}

.bar-layer {
  height: 33px;
}

.layer-btn {
  width: 161px;
  margin-left: 2px;
  margin-right: 3px;
  padding: 0 13px 0 2px;
  display: flex;
  justify-content: space-between;
  align-items: center;
}

.layer-input {
  width: 108px;
  border: 3px solid #000;
  background: var(--cyan);
}

.slots {
  width: 187px;
  margin: 0 auto;
  padding: 2px 2px 0 9px;
  display: flex;
  justify-content: space-between;
  background: var(--cyan);
  border: 1px solid #000;
  border-width: 0 1px;
}

.slots label {
  padding-top: 7px;
}

.slots .drop {
  width: 114px;
}

.bar-board {
  height: 29px;
}

.board {
  display: flex;
  align-items: center;
  gap: 3px;
  width: 306px;
  padding-left: 1px;
  background: var(--cyan);
  border: 1px solid #000;
  border-left: 0;
}

.board label {
  width: 163px;
}

.board .field {
  width: 104px;
  height: 24px;
}

.params {
  width: 170px;
  margin-right: 5px;
}

.finish {
  width: 128px;
  padding: 1px 2px;
  background: var(--cyan);
  border: 1px solid #000;
}

.finish .field {
  height: 25px;
}

.table-view {
  height: 495px;
  margin: 0 2px 0 1px;
  overflow: hidden;
  border: 2px solid;
  border-color: var(--dark) var(--light) var(--light) var(--dark);
}

.tools {
  width: 100%;
  table-layout: fixed;
  border-collapse: separate;
  border-spacing: 0;
  border-left: 2px solid #000;
}

.w-fig { width: 26px; }
.w-tool { width: 68px; }
.w-count { width: 60px; }
.w-len { width: 83px; }
.w-type { width: 116px; }
.w-tol { width: 74px; }

.tools th {
  height: 38px;
  padding: 0;
  background: #b3ffff;
  background-clip: padding-box;
  border-right: 2px solid #000;
  border-bottom: 3px solid var(--teal);
  box-shadow: inset 0 1px #000, inset 0 -1px #000;
  overflow: hidden;
  white-space: nowrap;
}

.tools th.left {
  text-align: left;
  padding-left: 3px;
}

.tools td {
  height: 33px;
  padding: 0;
  border-right: 2px solid #000;
  border-bottom: 2px solid #000;
}

.tools tbody tr:first-child td {
  height: 35px;
  border-top: 2px solid #000;
}

.tools td:last-child, .tools th:last-child {
  border-right: 0;
}

.tools .count {
  text-align: right;
  padding-right: 3px;
}

.tools .plain { background: #fff; }
.tools .soft { background: var(--cream); }

.tools .field {
  width: calc(100% - 4px);
  height: 27px;
  margin: 0 2px;
}

.tools .plain .field {
  border-color: #999 #ccc #ccc #999;
}

.tools .soft .field {
  border-color: #a3a382 #d2d2a8 #d2d2a8 #a3a382;
}

.tools .drop {
  margin: 0 2px 0 6px;
}

.tools select {
  height: 27px;
  background: var(--cream);
  border-color: #d2d2a8 #a3a382 #a3a382 #d2d2a8;
}

.tools .drop::after {
  right: 6px;
  border-color: #d2d2a8 #a3a382 #a3a382 #d2d2a8;
}

.tool-btn {
  display: block;
  width: 63px;
  height: 28px;
  margin-left: 1px;
  padding-left: 2px;
  text-align: left;
  background: var(--teal);
  border: 2px solid;
  border-color: var(--light) var(--dark) var(--dark) var(--light);
}

.tool-btn.active {
  background: var(--amber);
}

.sym {
  width: 20px;
  height: 20px;
  margin: 0 auto;
  background: #fff;
  border: 1px solid #000;
}

.sym text {
  font-size: 8px;
}

.scrollbar {
  display: flex;
  height: 15px;
  margin: 3px 1px 6px;
  background: #41ac92;
  border: 1px solid;
  border-color: var(--dark) var(--light) var(--light) var(--dark);
}

.scrollbar svg {
  width: 12px;
  height: 12px;
}

.thumb {
  flex: 670;
  background: var(--teal);
  border: 2px solid;
  border-color: var(--light) var(--dark) var(--dark) var(--light);
}

.trough {
  flex: 66;
}

.bar-nav {
  height: 34px;
  border: solid #000;
  border-width: 1px 0;
}

.bar-nav .btn {
  margin: 3px 2px;
}

.bar-nav .word {
  padding: 0 2px;
}

.current {
  width: 41px;
  margin-right: 4px;
  padding: 9px 3px;
  background: var(--amber);
  border-right: 1px solid #000;
  font-size: 12px;
}

.index {
  display: flex;
  align-items: center;
  gap: 5px;
  padding: 0 4px 0 3px;
}

.index .field {
  width: 59px;
  height: 28px;
  border-color: var(--dark) var(--light) var(--light) var(--dark);
}

.pic {
  width: 26px;
}

.pic svg {
  width: 16px;
  height: 16px;
  margin: 0 auto;
}

.pick {
  padding: 2px 2px 2px 6px;
  background: var(--cyan);
  border-left: 2px solid #000;
}

.pick-unit {
  width: 88px;
  margin-left: auto;
}

.pick-mode {
  width: 116px;
}

.bar-merge {
  justify-content: flex-end;
  height: 34px;
  margin-top: 4px;
  border: solid #000;
  border-width: 1px 0;
}

.combine {
  width: 125px;
}

.merge {
  width: 419px;
  display: flex;
  align-items: center;
  background: var(--cyan);
  padding-left: 11px;
}

.merge .drop {
  width: 213px;
  margin-left: auto;
}

.merge .btn {
  width: 53px;
  height: 26px;
  box-shadow: 0 0 0 2px var(--teal);
}

.bar-actions {
  height: 28px;
}

.bar-actions .btn {
  flex: 1;
  margin: 3px 3px 2px 2px;
}

.mark-tool {
  left: 32px;
  top: 391px;
  width: 710px;
  height: 43px;
}
```
